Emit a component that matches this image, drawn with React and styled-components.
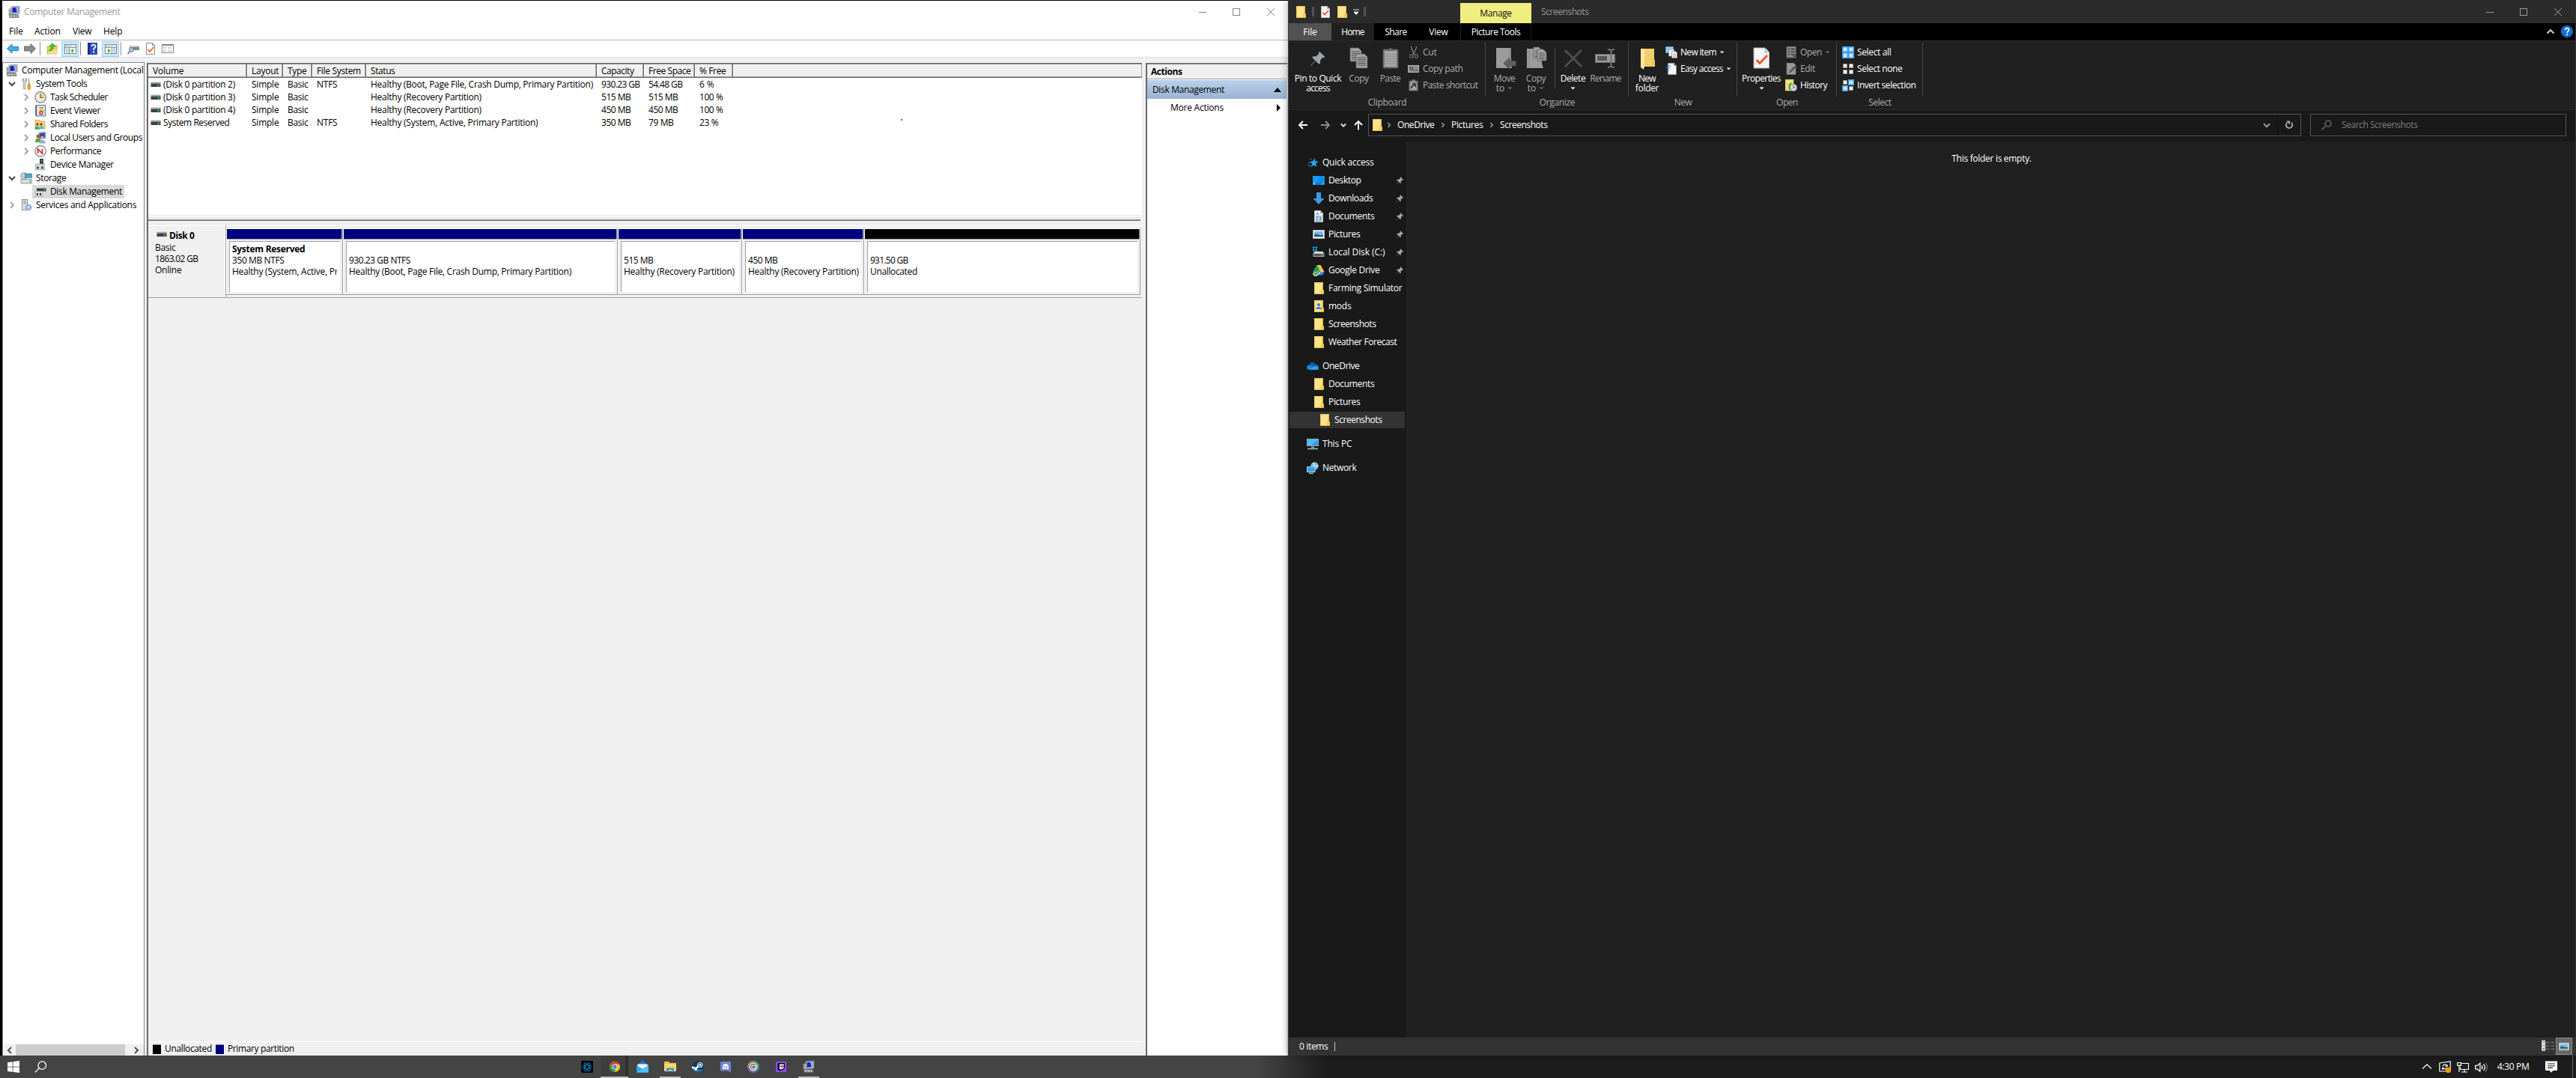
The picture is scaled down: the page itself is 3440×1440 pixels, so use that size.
import React from "react";
import styled, { createGlobalStyle, css } from "styled-components";

const FONT = '"Open Sans", "Noto Sans", sans-serif';

const Global = createGlobalStyle`
  * { box-sizing: border-box; }
  body { margin: 0; background: #000; font-family: ${FONT}; font-size: 12px; overflow: hidden; }
  svg { display: block; flex: none; }
`;

/* ---------- text ---------- */

const ctx = document.createElement("canvas").getContext("2d");
function spacingFor(text, width, bold) {
  ctx.font = `${bold ? 700 : 400} 12px ${FONT}`;
  return (width + 0.4 - ctx.measureText(text).width) / text.length;
}

const TextBox = styled.span`
  display: block;
  flex: none;
  white-space: pre;
  line-height: 16px;
  height: 16px;
  font-weight: ${(p) => (p.$bold ? 700 : 400)};
  color: ${(p) => p.$c || "inherit"};
`;

function Text({ children, w, bold, c }) {
  return (
    <TextBox $bold={bold} $c={c} style={w ? { letterSpacing: spacingFor(children, w, bold) + "px" } : undefined}>
      {children}
    </TextBox>
  );
}

/* ---------- icons ---------- */

const Monitor = () => (
  <>
    <path d="M4 1l11-1v10l-11 1z" fill="#cfd0c8" stroke="#777" strokeWidth=".7" />
    <path d="M5.500 2.300l8-.8v6.800l-8 .6z" fill="#1322c4" />
    <path d="M10 2l3.500-.4v6.500l-2 .2z" fill="#8fb3f5" />
    <rect x="1" y="4" width="4" height="7" fill="#b8bcae" stroke="#777" strokeWidth=".6" />
    <rect x="2" y="6" width="1.500" height="2" fill="#4cc22c" />
    <path d="M1 11.500h12l1 2v2h-12z" fill="#8d979c" stroke="#5b6468" strokeWidth=".6" />
    <path d="M3 13.500h2m2 0h2m2 0h1" stroke="#eee" />
  </>
);

const Page = ({ x = 2, y = 0, w = 12, h = 16, fill = "#fff", stroke = "#888" }) => (
  <path
    d={`M${x + 0.5} ${y + 0.5}h${w - 4}l3 3v${h - 4}h-${w - 1}z M${x + w - 3.5} ${y + 0.5}v3h3`}
    fill={fill}
    stroke={stroke}
  />
);

const Folder = () => (
  <>
    <path d="M2 0h11.500v10l1 .5v5.500H2z" fill="#ffe48c" />
    <path d="M2 0h11.500v10.500H13V.5H2.500v15h9v-5h1.500l.5.500" fill="none" stroke="#e8bf45" strokeWidth=".8" />
    <path d="M12 10.500h2.500v5.200H12z" fill="#ffd966" stroke="#e8bf45" strokeWidth=".8" />
    <path d="M2 15.600h12.500" stroke="#e0b236" strokeWidth=".9" />
  </>
);

const ConsoleWin = ({ right }) => (
  <>
    <rect x=".5" y="2.500" width="15" height="12" fill="#fff" stroke="#808890" />
    <path d="M1 4.500h14" stroke="#9aa2aa" />
    <path d="M1 6.500h14" stroke="#808890" />
    <path d="M11 4.500h1m1 0h1" stroke="#fff" />
    {right ? (
      <>
        <path d="M9.500 7v7" stroke="#808890" />
        <path d="M11 8.500h3.500M11 10.500h3.500M11 12.500h3.500" stroke="#8fa7bd" />
        <path d="M4 8l4 2.700-4 2.700z" fill="#3fae2a" />
      </>
    ) : (
      <>
        <path d="M6.500 7v7" stroke="#808890" />
        <path d="M2 8.500h3.500M2 10.500h3.500M2 12.500h3.500" stroke="#8fa7bd" />
        <path d="M12 8l-4 2.700 4 2.700z" fill="#3fae2a" />
      </>
    )}
  </>
);

const Disk = () => (
  <>
    <path d="M1.500 4h11l1 2H.5z" fill="#dcdcdc" />
    <rect x=".5" y="5.500" width="13" height="5.500" fill="#3a3f42" />
    <rect x=".5" y="5.500" width="13" height="1.200" fill="#b9b9b9" />
    <rect x="9.500" y="8" width="2" height="2" fill="#35e03b" />
  </>
);

const PinShape = ({ fill }) => (
  <path d="M9.600 0.500l5.900 5.900-1.300.9-1-.3-2.900 3 .2 3-1.400 1.200-3.600-3.700L.6 15.800l-.4-.4 5-5L1.700 7l1.300-1.300 3 .1 3-2.900-.3-1.100z" fill={fill} />
);

const Chevron = ({ dir = "right", c = "#999", w = 1.5 }) => {
  const d = { right: "M6 4l4 4-4 4", down: "M4 6l4 4 4-4", left: "M10 4L6 8l4 4", up: "M4 10l4-4 4 4" }[dir];
  return <path d={d} fill="none" stroke={c} strokeWidth={w} />;
};

const SmallSquares = ({ on }) =>
  [
    [0.5, 0.5],
    [8.5, 0.5],
    [0.5, 8.5],
    [8.5, 8.5],
  ].map(([x, y], i) =>
    on[i] ? (
      <g key={i}>
        <rect x={x - 0.5} y={y - 0.5} width="8" height="8" fill="#3aa0f3" />
        <rect x={x + 1} y={y + 1} width="5" height="5" fill="#cbe8ff" />
      </g>
    ) : (
      <rect key={i} x={x + 1} y={y + 1} width="5" height="5" fill="#fff" stroke="#8a8a8a" />
    )
  );

const GreyPage = ({ x, y, w = 14, h = 18 }) => (
  <>
    <path d={`M${x} ${y}h${w - 4}l4 4v${h - 4}h-${w}z`} fill="#a3a3a3" stroke="#5c5c5c" strokeWidth=".8" />
    <path
      d={[5, 7.5, 10, 12.5, 15].filter((v) => v < h - 1).map((v) => `M${x + 2} ${y + v}h${w - 4}`).join("")}
      stroke="#4f4f4f"
      strokeWidth="1"
    />
  </>
);

const ICONS = {
  computer: <Monitor />,
  folder: <Folder />,
  back: <path d="M.5 8L7 2v3.500h8.500v5H7V14z" fill="#3fb0ea" stroke="#1d78b5" strokeWidth=".9" />,
  fwd: <path d="M15.500 8L9 1.500V5H.5v6H9v3.500z" fill="#8c8c8c" stroke="#5f5f5f" strokeWidth=".9" />,
  up: (
    <>
      <path d="M1 5h5l1-1.500h7V15H1z" fill="#f1cf6d" stroke="#c9a13a" strokeWidth=".8" />
      <path d="M2 9h12v6H2z" fill="#f8dd86" />
      <path d="M3 10c1 0 3-1 3-5H3.500L8 .5 12 5H9.500c0 4-2.500 6.500-6.500 6z" fill="#4ec42e" stroke="#2f8d1d" strokeWidth=".6" />
    </>
  ),
  winLeft: <ConsoleWin />,
  winRight: <ConsoleWin right />,
  help: (
    <>
      <rect x="1" y="0" width="13" height="16" fill="#2b4db8" />
      <rect x="1" y="0" width="3" height="16" fill="#1a2f86" />
      <path d="M6.500 5c0-3 5-3 5 0 0 2-2.500 2-2.500 5" fill="none" stroke="#fff" strokeWidth="1.700" />
      <rect x="8" y="11.500" width="2" height="2" fill="#fff" />
    </>
  ),
  drivePlug: (
    <>
      <path d="M3 4h12l1 2v4H4z" fill="#7b8286" />
      <path d="M3 4h12l.8 2H4z" fill="#c9cdd0" />
      <rect x="12" y="7" width="2" height="2" fill="#2fd63a" />
      <circle cx="5.500" cy="9.500" r="3" fill="#a9c8dc" stroke="#6e7c85" />
      <path d="M3.500 11.500L.5 15" stroke="#6e7c85" strokeWidth="1.600" />
    </>
  ),
  propsLight: (
    <>
      <Page />
      <path d="M4.500 9l2.500 3 5-6" fill="none" stroke="#f26522" strokeWidth="1.800" />
    </>
  ),
  listWin: (
    <>
      <rect x=".5" y="2.500" width="15" height="11" fill="#fff" stroke="#7c858c" />
      <path d="M1 3.500h14" stroke="#7c858c" />
      <path d="M2.500 6.500l1 1 2-2M2.500 10.500l1 1 2-2" stroke="#3a8fe0" fill="none" />
      <path d="M8 7h5M8 11h5" stroke="#9aa2a8" />
    </>
  ),
  tools: (
    <>
      <path d="M3 1v4l1.500 1V15h2.500V6L8.500 5V1L7 1v3H4.500V1z" fill="#d3d6d8" stroke="#888d90" strokeWidth=".7" />
      <path d="M11.500 1v7" stroke="#9da1a4" strokeWidth="1.500" />
      <rect x="10" y="8" width="3.500" height="7.500" rx="1.500" fill="#eda21f" stroke="#c47c0a" strokeWidth=".6" />
    </>
  ),
  clock: (
    <>
      <circle cx="8" cy="8" r="7.200" fill="#f3ecd6" stroke="#8b8d8f" strokeWidth="1.400" />
      <path d="M8 8V2.500a5.500 5.500 0 0 1 5.500 5.500z" fill="#efd08a" />
      <path d="M8 3.500V8.500h4" stroke="#4d5b6a" fill="none" strokeWidth="1.200" />
    </>
  ),
  event: (
    <>
      <rect x="2.500" y=".5" width="12" height="14.500" fill="#dfe9f3" stroke="#4c6f97" />
      <path d="M2 1v14M1 3h2M1 6h2M1 9h2M1 12h2" stroke="#333f4d" />
      <path d="M6 3.500h6M6 12.500h3" stroke="#6c8fb5" />
      <path d="M9.500 3l3 5.500h-6z" fill="#ffcf28" stroke="#a67a00" strokeWidth=".5" />
      <circle cx="9" cy="11" r="2.700" fill="#d9363e" />
      <path d="M8 10l2 2m0-2l-2 2" stroke="#fff" strokeWidth=".8" />
    </>
  ),
  shared: (
    <>
      <path d="M1 2.500h6l1 1.500h6v10H1z" fill="#f3d477" stroke="#c6a040" strokeWidth=".8" />
      <circle cx="4" cy="8" r="1.700" fill="#6b4a33" />
      <circle cx="9" cy="8" r="1.700" fill="#6b4a33" />
      <path d="M.5 15c0-6 6-6 6.500 0z" fill="#46ad86" />
      <path d="M6.500 14c0-5 5.500-5 6 0z" fill="#5ab3c9" />
    </>
  ),
  users: (
    <>
      <path d="M6 1l9-1v9l-9 1z" fill="#cfd0c8" stroke="#777" strokeWidth=".6" />
      <path d="M7 2l7-.8V8l-7 .8z" fill="#2a4bd0" />
      <circle cx="5" cy="6" r="2.600" fill="#9b6a3c" />
      <path d="M.8 14c0-7 8-7 8.400 0z" fill="#57a84a" />
      <circle cx="10.500" cy="8" r="2.300" fill="#e0b070" />
      <path d="M6.500 15.500c0-6 8-6 8.500 0z" fill="#86acd8" />
    </>
  ),
  perf: (
    <>
      <circle cx="8" cy="8" r="7.200" fill="#fff" stroke="#8b8d8f" strokeWidth="1.400" />
      <path d="M4.500 11V5l6 6V5" stroke="#d2202a" strokeWidth="1.600" fill="none" />
    </>
  ),
  device: (
    <>
      <rect x="7" y="0" width="5" height="7" fill="#3b4146" />
      <rect x="9" y="2" width="1.500" height="1.500" fill="#46d24a" />
      <rect x="1.500" y="7" width="12" height="8" fill="#d5d7d9" stroke="#9b9fa2" strokeWidth=".7" />
      <rect x="3.500" y="10.500" width="2" height="3" fill="#222" />
      <rect x="9.500" y="10.500" width="2" height="3" fill="#222" />
    </>
  ),
  storage: (
    <>
      <circle cx="5" cy="5" r="4.500" fill="#c9cfd3" stroke="#868d92" strokeWidth=".8" />
      <circle cx="5" cy="5" r="1.300" fill="#fff" stroke="#868d92" strokeWidth=".5" />
      <rect x="6.500" y="2" width="9" height="5.500" fill="#43a7df" stroke="#5b6a74" strokeWidth=".7" />
      <path d="M1 9.500h14.500v5.500H1z" fill="#d9dcde" stroke="#80868a" strokeWidth=".8" />
      <rect x="12" y="11.500" width="2" height="2" fill="#3ec83a" />
    </>
  ),
  diskmgmt: (
    <>
      <path d="M4 2h11l1 1.500H3z" fill="#d6d8da" />
      <rect x="3" y="3.500" width="12.500" height="4" fill="#3b4146" />
      <rect x="12" y="4.700" width="2" height="1.600" fill="#46d24a" />
      <path d="M1.500 7.500h9v7h-9z" fill="#dcdedf" stroke="#a2a6a8" strokeWidth=".7" />
      <rect x="3" y="10" width="1.800" height="3" fill="#222" />
      <rect x="7" y="10" width="1.800" height="3" fill="#222" />
    </>
  ),
  services: (
    <>
      <rect x="2.500" y=".5" width="7" height="14" fill="#dce1e4" stroke="#8a9296" />
      <path d="M4 3h4M4 5.500h4" stroke="#5d8f6a" />
      <circle cx="11" cy="11" r="3.400" fill="none" stroke="#8fb2d4" strokeWidth="2.600" strokeDasharray="2 .7" />
      <circle cx="11" cy="11" r="2.300" fill="#dfeaf4" stroke="#6d93b8" strokeWidth=".8" />
    </>
  ),
  disk: <Disk />,
  cRight: <Chevron c="#a0a0a0" w={1.8} />,
  cDown: <Chevron dir="down" c="#404040" w={2} />,
  cRightSm: <path d="M6.300 5l3 3-3 3" fill="none" stroke="#9a9a9a" strokeWidth="1.500" />,
  sbLeft: <Chevron dir="left" c="#505050" w={2} />,
  sbRight: <Chevron c="#505050" w={2} />,
  navDown: <path d="M4.800 6.500L8 9.700l3.200-3.200" fill="none" stroke="#ddd" strokeWidth="2" />,
  addrDown: <path d="M4 6.300l4 4 4-4" fill="none" stroke="#999" strokeWidth="2" />,
  ribUp: <path d="M3.500 10.500L8 6.200l4.500 4.300" fill="none" stroke="#c8c8c8" strokeWidth="2.200" />,
  navBack: <path d="M15 8H4M9 3L4 8l5 5" fill="none" stroke="#fff" strokeWidth="1.900" />,
  navFwd: <path d="M2 8h11M8 3l5 5-5 5" fill="none" stroke="#8a8a8a" strokeWidth="1.900" />,
  navUp: <path d="M8 14.500V3M3 8l5-5 5 5" fill="none" stroke="#fff" strokeWidth="1.900" />,
  refresh: (
    <>
      <path d="M10.800 4.800A4.200 4.200 0 1 1 5.500 4.600" fill="none" stroke="#aaa" strokeWidth="1.800" />
      <path d="M4 2.500h5v5z" fill="#aaa" />
    </>
  ),
  glass: <path d="M6.200 9.800L1.500 14.500M6 6a4 4 0 1 0 8 0a4 4 0 1 0-8 0" fill="none" stroke="#888" strokeWidth="1.100" />,
  glassWhite: <path d="M6.200 10L.8 15.400M5 6.200a5 5 0 1 0 10.500 0a5 5 0 1 0-10.500 0" fill="none" stroke="#fff" strokeWidth="1.300" />,
  propsDark: (
    <>
      <Page x={2} w={12} fill="#f4f4f4" stroke="#bbb" />
      <path d="M4.500 9l2.500 2.500 5-5.500" fill="none" stroke="#f0541e" strokeWidth="1.800" />
    </>
  ),
  helpBlue: (
    <>
      <circle cx="8" cy="8" r="8" fill="#0a6fd6" />
      <path d="M5.700 6c0-3.200 4.800-3 4.800 0 0 1.800-2.400 1.800-2.400 4" fill="none" stroke="#fff" strokeWidth="1.800" />
      <rect x="7.200" y="11.200" width="1.900" height="1.900" fill="#fff" />
    </>
  ),
  cut: (
    <>
      <path d="M4.500 0c0 4 2 7 5.500 11.500M11.500 0c0 4-2 7-5.500 11.500" stroke="#8a8a8a" fill="none" strokeWidth="1.200" />
      <circle cx="4.800" cy="13" r="2.200" fill="none" stroke="#6a6a6a" strokeWidth="1.300" />
      <circle cx="11.200" cy="13" r="2.200" fill="none" stroke="#6a6a6a" strokeWidth="1.300" />
    </>
  ),
  copyPath: (
    <>
      <rect x=".5" y="3.500" width="14" height="9" fill="#8d8d8d" stroke="#b5b5b5" />
      <path d="M2.500 5.500l2 5M5.500 5.500l2 5M9 10h1M11 10h1M12.700 10h1" stroke="#2a2a2a" />
    </>
  ),
  pasteShort: (
    <>
      <rect x="1.500" y="2" width="12" height="13.500" fill="#7a7a7a" />
      <rect x="3.500" y="4" width="8" height="10" fill="#a5a5a5" />
      <rect x="5" y=".5" width="5" height="3" fill="#888" />
      <path d="M5 12c0-3 1-4 3.500-4.500M6 6h4v4" fill="none" stroke="#222" strokeWidth="1.700" />
    </>
  ),
  newItem: (
    <>
      <rect x=".5" y=".5" width="10" height="8" fill="#9bd0f5" stroke="#4d94c9" />
      <rect x="4.500" y="4" width="7" height="9" fill="#fff" stroke="#888" strokeWidth=".8" />
      <path d="M8.500 6.500h5l2 2v7h-7z" fill="#fff" stroke="#888" strokeWidth=".8" />
      <path d="M10 10h4M10 12h4M10 14h4" stroke="#cf6b6b" strokeWidth=".8" />
    </>
  ),
  easy: (
    <>
      <Page x={3} w={12} fill="#f6f6f6" stroke="#999" />
      <path d="M2 4h5M0 7h6M2 10h3" stroke="#2a7cc7" strokeWidth="1.200" />
    </>
  ),
  openG: (
    <>
      <rect x="2" y="0" width="12" height="15" fill="#8c8c8c" stroke="#666" />
      <path d="M4 3.500h2M4 7h2M4 10.500h2M7.500 3.500h5M7.500 7h5M7.500 10.500h3" stroke="#333" strokeWidth="1.600" />
      <path d="M11 16v-3H9l3-3.500 3 3.500h-2v3z" fill="#555" />
    </>
  ),
  editG: (
    <>
      <path d="M2 0h9l3 3v12.500H2z" fill="#9a9a9a" stroke="#6b6b6b" />
      <path d="M5 13.500l1-3.500 7.500-7 2 2-7.500 7.500z" fill="#5a5a5a" />
    </>
  ),
  history: (
    <>
      <path d="M0 0h11v15H0z" fill="#ffe07a" stroke="#e0b43c" strokeWidth=".8" />
      <path d="M8 4C4 6 4 9 5 11l-1.700.5L7 14.500l1-4.300-1.400.4C6 8.500 6.500 7 9 6z" fill="#2fb32f" />
      <circle cx="11" cy="11" r="4.700" fill="#d9dde0" stroke="#81878b" />
      <path d="M11 8v3h2.500M8.500 13l1-1" stroke="#555" fill="none" />
    </>
  ),
  selAll: <SmallSquares on={[1, 1, 1, 1]} />,
  selNone: <SmallSquares on={[0, 0, 0, 0]} />,
  selInv: <SmallSquares on={[0, 1, 1, 0]} />,
  star: (
    <>
      <path d="M10.500 2l1 4.500 4.500.3-3.900 2.700 1.300 4.500-3.900-2.500L5.700 14l1.500-4.300L4 6.800l4.300-.3z" fill="#2aa5f5" />
      <path d="M1.500 8.500h4M.5 11h4M2.500 13.200h3M4 3.500h3" stroke="#1b6dac" strokeWidth="1" />
    </>
  ),
  desktop: (
    <>
      <rect x="0" y="2" width="16" height="12" fill="#1a9bf5" />
      <path d="M9 2h7v12H3z" fill="#0f8ce8" />
      <path d="M0 12.500h16" stroke="#0b5fa5" />
      <path d="M1 12.500h2M12 12.500h1M14 12.500h1" stroke="#fff" />
    </>
  ),
  download: <path d="M5 0h6v8h4.500L8 16 .5 8H5z" fill="#3f9ae8" />,
  docs: (
    <>
      <Page x={2} w={12} fill="#f5f5f5" stroke="#b5b5b5" />
      <path d="M5 6l1.500-3L8 6M4 8h8M4 10h4M4 12h4M4 14h8" stroke="#2b7fd0" fill="none" strokeWidth="1" />
      <rect x="9" y="9.500" width="3" height="3" fill="#4a8" />
    </>
  ),
  pics: (
    <>
      <rect x=".5" y="2.500" width="15" height="11" fill="#fff" stroke="#aaa" />
      <rect x="2" y="4" width="12" height="8" fill="#7fb8ee" />
      <path d="M2 8c3-2 6 2 12 1v3H2z" fill="#2f5f5a" />
      <path d="M2 11h12v1H2z" fill="#8fc3dd" />
    </>
  ),
  drive: (
    <>
      <path d="M0 .5h2.500V3H0zM3.500 .5H6V3H3.500zM0 4h2.500v2.500H0zM3.500 4H6v2.500H3.500z" fill="#12a7ee" />
      <path d="M2.500 7h11l1.500 2.500H1z" fill="#e4e4e4" />
      <rect x="1" y="9.500" width="14" height="4" fill="#55595c" stroke="#c8c8c8" strokeWidth=".8" />
      <rect x="11" y="10.700" width="1.600" height="1.600" fill="#3be04a" />
    </>
  ),
  gdrive: (
    <>
      <path d="M5.500 1h5l5 9h-5z" fill="#f7c62f" />
      <path d="M5.500 1L.3 10l2.600 4.500L8 5.500z" fill="#1ea362" />
      <path d="M5.500 10h10l-2.600 4.500H3z" fill="#4688f4" />
      <path d="M1 11.500l3 3L11 7" stroke="#fff" strokeWidth="4" fill="none" />
      <path d="M1.500 11.500l2.500 2.500L10.500 7.500" stroke="#3f9d22" strokeWidth="2.200" fill="none" />
    </>
  ),
  folderUser: (
    <>
      <Folder />
      <circle cx="8" cy="6.200" r="2.100" fill="#3c7de0" />
      <path d="M4 12c0-4 8-4 8 0z" fill="#3c7de0" />
    </>
  ),
  onedrive: (
    <>
      <path d="M3.500 6.500C4.500 2.500 9 1.500 11.500 5.500c2.500 0 4 1.500 4 3.500l-8 1z" fill="#0f5fb4" />
      <path d="M0 10c0-2.500 2-4 4.500-3.500L13 13H3c-2 0-3-1.500-3-3z" fill="#1583d8" />
      <path d="M3 13l6-4.500c3-1 6.500-.5 7 2 0 1.500-1 2.500-2.500 2.500z" fill="#29a3ec" />
    </>
  ),
  thispc: (
    <>
      <rect x=".5" y="1.500" width="15" height="9" fill="#4dbcfa" stroke="#8fa7b5" />
      <path d="M15 2v8H6z" fill="#2aa0ec" />
      <path d="M6 12.500h4M1 14.500h14" stroke="#aebac2" strokeWidth="1.300" />
    </>
  ),
  network: (
    <>
      <circle cx="10.500" cy="5.500" r="5.200" fill="#7fb9d8" />
      <path d="M8 2c2 0 3 1 2 3s3 1 5 0" stroke="#d6ecf7" fill="none" strokeWidth="1.500" />
      <rect x=".5" y="6.500" width="10.500" height="7" fill="#2fa6f0" stroke="#9fc6dd" />
      <path d="M3 15.300h6" stroke="#c5ced4" strokeWidth="1.300" />
    </>
  ),
  pin: (
    <g transform="translate(3 3) scale(.65)">
      <PinShape fill="#9aa7b0" />
    </g>
  ),
  viewDetails: (
    <>
      <rect x=".5" y="1" width="4" height="12.500" fill="#eee" stroke="#bbb" />
      <rect x="1.800" y="2.500" width="1.500" height="1.500" fill="#4a6" />
      <rect x="1.800" y="6.500" width="1.500" height="1.500" fill="#37c" />
      <rect x="1.800" y="10.500" width="1.500" height="1.500" fill="#d22" />
      <path d="M6 3.500h4M12 3.500h4M6 7.500h4M12 7.500h4M6 11.500h4M12 11.500h4" stroke="#8a8a8a" />
    </>
  ),
  win: <path d="M0 2.300l6.700-1v6.500H0zM7.500 1.200L16 0v7.800H7.500zM0 8.500h6.700V15L0 14zM7.500 8.500H16V16l-8.500-1z" fill="#fff" />,
  bnet: (
    <>
      <rect width="16" height="16" rx="1" fill="#05080c" />
      <g fill="none" stroke="#1496dc" strokeWidth=".8">
        <ellipse cx="8" cy="8.300" rx="6.200" ry="2.600" />
        <ellipse cx="8" cy="8.300" rx="6.200" ry="2.600" transform="rotate(60 8 8.300)" />
        <ellipse cx="8" cy="8.300" rx="6.200" ry="2.600" transform="rotate(120 8 8.300)" />
      </g>
    </>
  ),
  chrome: (
    <>
      <circle cx="8" cy="8" r="7" fill="#fbc116" />
      <path d="M14.060 4.500H8L5 9.500l-3.060-5A7 7 0 0 1 14.060 4.500z" fill="#e33b2e" />
      <path d="M1.940 4.500L5 9.700l5 .3-2.500 5A7 7 0 0 1 1.940 4.500z" fill="#2a9d47" />
      <circle cx="8" cy="8" r="3.500" fill="#fff" />
      <circle cx="8" cy="8" r="2.700" fill="#4285f4" />
    </>
  ),
  mail: (
    <>
      <path d="M0 6l8-6 8 6v9.500H0z" fill="#1a7fd0" />
      <path d="M1.500 4.500h13V9l-6.500 4-6.500-4z" fill="#f2f7fb" />
      <path d="M0 6l8 5 8-5v9.500H0z" fill="#28a8ea" />
      <path d="M0 15.500L16 6v9.500z" fill="#50c4f6" />
    </>
  ),
  explorer: (
    <>
      <path d="M0 1h6l1.500 2H16v11H0z" fill="#f6c244" />
      <path d="M0 4h16v10H0z" fill="#ffd869" />
      <path d="M3 9.500h10V15h-3v-3H6v3H3z" fill="#3d97dc" />
    </>
  ),
  steam: (
    <>
      <circle cx="8" cy="8" r="8" fill="#123a63" />
      <path d="M1 11.500A8 8 0 0 0 15 11.500z" fill="#1f72ad" />
      <path d="M0 8.500l5 2 4.500-4" stroke="#fff" strokeWidth="2.600" fill="none" />
      <circle cx="10.800" cy="5.500" r="3" fill="#123a63" stroke="#fff" strokeWidth="1.200" />
      <circle cx="10.800" cy="5.500" r="1.400" fill="#fff" />
      <circle cx="5.300" cy="11" r="2" fill="#fff" />
    </>
  ),
  discord: (
    <>
      <path d="M1 2.500A1.500 1.500 0 0 1 2.500 1h11A1.500 1.500 0 0 1 15 2.500V16l-3-2.500H2.500A1.500 1.500 0 0 1 1 12z" fill="#7285d4" />
      <path d="M4 10.500C4 7 5 5 5 5c1.500-1 4.500-1 6 0 0 0 1 2 1 5.500-1 1-2 1-2 1l-.7-1H6.700l-.7 1s-1 0-2-1z" fill="#fff" />
      <circle cx="6.500" cy="8.200" r="1" fill="#7285d4" />
      <circle cx="9.500" cy="8.200" r="1" fill="#7285d4" />
    </>
  ),
  rings: (
    <>
      <circle cx="8" cy="8" r="7.900" fill="#596066" />
      <path d="M8 .8A7.200 7.200 0 0 1 15.200 8" fill="none" stroke="#3da36a" strokeWidth="1.600" />
      <path d="M15.200 8A7.200 7.200 0 0 1 8 15.200" fill="none" stroke="#3a7ec0" strokeWidth="1.600" />
      <path d="M8 15.200A7.200 7.200 0 0 1 .8 8" fill="none" stroke="#8e50a8" strokeWidth="1.600" />
      <path d="M.8 8A7.200 7.200 0 0 1 8 .8" fill="none" stroke="#c87e4a" strokeWidth="1.600" />
      <circle cx="8" cy="8" r="5" fill="none" stroke="#f2f2f2" strokeWidth="1.400" />
      <circle cx="8.300" cy="8.300" r="2.500" fill="none" stroke="#f2f2f2" strokeWidth="1.300" />
    </>
  ),
  twitch: (
    <>
      <rect x="1" y="1" width="14" height="14" rx="1" fill="#9147ff" />
      <path d="M4.500 3H13v7l-2.500 2.500H8L6 14.500v-2H3.500V4.500z" fill="#0b0612" />
      <path d="M6 4.500h5.700v4.800L10.200 11H8.500L7.300 12.200V11H6z" fill="#fff" />
      <path d="M8 6v3M10.200 6v3" stroke="#0b0612" strokeWidth="1.100" />
    </>
  ),
  trayUp: <path d="M2 10.500L8 5l6 5.500" fill="none" stroke="#eee" strokeWidth="1.500" />,
  sync: (
    <>
      <path d="M.8 3l14.400-2v13H.8z" fill="none" stroke="#fff" strokeWidth="1.200" />
      <path d="M5 7.500c1-3 4.500-3 5.500-1M11 5v2.300H8.500M10.500 9c-1 2.500-4.500 2.500-5.500.5M4.700 12V9.500H7" fill="none" stroke="#fff" strokeWidth="1.200" />
      <circle cx="12.500" cy="12.500" r="3.700" fill="#ff9a0c" />
    </>
  ),
  lan: (
    <>
      <path d="M5 3.500h10.500v8H4.500v-3M10 12v2.500M6 15h8" fill="none" stroke="#fff" strokeWidth="1.200" />
      <path d="M.7 2.500h4.600v3.800H.7zM3 6.300V15" fill="none" stroke="#fff" strokeWidth="1.200" />
    </>
  ),
  volume: (
    <>
      <path d="M.7 6h2.500L6.500 3v10.500l-3.300-3H.7z" fill="none" stroke="#fff" strokeWidth="1.200" />
      <path d="M8.500 6c1.200 1.500 1.200 3 0 4.500M10.800 4.200c2.300 2.500 2.300 5.600 0 8" fill="none" stroke="#fff" strokeWidth="1.200" />
      <path d="M13 2.500c3.300 3.500 3.300 8 0 11.500" fill="none" stroke="#777" strokeWidth="1.200" />
    </>
  ),
  action: (
    <>
      <path d="M0 .5h16v12.500h-5.500L8 15.800 5.500 13H0z" fill="#fff" />
      <path d="M3 4h10M3 6.700h10M3 9.400h7" stroke="#222" strokeWidth="1.100" />
    </>
  ),
};

function Icon({ n, size = 16 }) {
  return (
    <svg width={size} height={size} viewBox="0 0 16 16">
      {ICONS[n]}
    </svg>
  );
}

const BIG = {
  pin: (
    <g transform="translate(6 6) scale(1.250)">
      <PinShape fill="#9aa7b0" />
    </g>
  ),
  copy: (
    <>
      <GreyPage x={4} y={2} w={15} h={18} />
      <GreyPage x={12} y={10} w={15} h={19} />
    </>
  ),
  paste: (
    <>
      <rect x="6" y="4" width="20" height="25" rx="1" fill="#7b7b7b" stroke="#555" />
      <rect x="8" y="6" width="16" height="21" fill="#a8a8a8" />
      <path d="M8 11h16M8 14h16M8 17h16M8 20h16M8 23h16" stroke="#8a8a8a" />
      <path d="M11 6V4h3a2 2 0 0 1 4 0h3v2z" fill="#666" />
    </>
  ),
  moveTo: (
    <>
      <path d="M5 2h20v20l1 7H5z" fill="#9b9b9b" />
      <path d="M24 2v14" stroke="#777" />
      <path d="M15 22.500l7.500-7v4H31v6.500h-8.500v4z" fill="#606060" stroke="#4c4c4c" />
    </>
  ),
  copyTo: (
    <>
      <path d="M4 3h20v20l2 6H4z" fill="#9b9b9b" />
      <path d="M7 3v26" stroke="#888" />
      <GreyPage x={13} y={1} w={11} h={14} />
      <GreyPage x={18} y={4} w={12} h={15} />
    </>
  ),
  del: <path d="M5 5l22 22M27 5L5 27" stroke="#4d4d4d" strokeWidth="3" />,
  rename: (
    <>
      <rect x="2.500" y="10.500" width="26" height="11" fill="#9a9a9a" stroke="#6a6a6a" />
      <rect x="5" y="13" width="13" height="6" fill="#555" />
      <path d="M19 4c3 0 4.500 1 4.500 3v18c0 2-1.500 3-4.500 3M28 4c-3 0-4.500 1-4.500 3M28 28c-3 0-4.500-1-4.500-3" fill="none" stroke="#6f6f6f" strokeWidth="2" />
    </>
  ),
  newFolder: (
    <>
      <path d="M7 3h18v14l1 1v9H7z" fill="#f3cf6c" />
      <path d="M7 3h5v23l-1 5-4-3z" fill="#ffe7a0" />
      <path d="M24 17v9" stroke="#d9ad3e" />
    </>
  ),
  props: (
    <>
      <path d="M6 2h15l5.500 5.500V29H6z" fill="#f5f5f5" stroke="#aaa" />
      <path d="M21 2v5.500h5.500" fill="#ddd" stroke="#aaa" />
      <path d="M9.500 18l4.500 4.500L24 12" fill="none" stroke="#f0541e" strokeWidth="2.800" />
    </>
  ),
};

const BigIcon = ({ n }) => (
  <svg width="32" height="32" viewBox="0 0 32 32">
    {BIG[n]}
  </svg>
);

/* ---------- desktop frame ---------- */

const Desktop = styled.div`
  width: 3440px;
  height: 1440px;
  display: flex;
  flex-direction: column;
  background: #000;
`;
const Windows = styled.div`
  height: 1410px;
  display: flex;
`;

/* ---------- computer management ---------- */

const Mmc = styled.div`
  width: 1717px;
  margin: 1px 0 0 3px;
  height: 1409px;
  background: #fff;
  color: #000;
  display: flex;
  flex-direction: column;
`;
const TitleBar = styled.div`
  height: 30px;
  display: flex;
  align-items: center;
  padding-left: 8px;
  gap: 5px;
  flex: none;
`;
const WinButtons = styled.div`
  margin-left: auto;
  display: flex;
  align-items: center;
  padding-right: 18px;
`;
const MenuBar = styled.div`
  height: 23px;
  display: flex;
  align-items: center;
  padding-left: 9px;
  border-bottom: 1px solid #b4b8c0;
  flex: none;
`;
const MenuItem = styled.div`
  width: ${(p) => p.$w}px;
`;
const ToolBar = styled.div`
  height: 23px;
  display: flex;
  align-items: center;
  padding-left: 2px;
  border-bottom: 1px solid #dadada;
  flex: none;
`;
const ToolButton = styled.div`
  width: 23px;
  height: 21px;
  margin-right: ${(p) => p.$mr || 0}px;
  display: flex;
  align-items: center;
  justify-content: center;
  ${(p) => p.$on && css`background: #cce8ff; border: 1px solid #99d1ff;`}
`;
const ToolSep = styled.div`
  width: 1px;
  height: 18px;
  margin-right: ${(p) => p.$mr}px;
  background: #8d8d8d;
`;
const MmcBody = styled.div`
  flex: 1;
  display: flex;
  background: #f0f0f0;
  padding-top: 6px;
  min-height: 0;
`;
const TreePane = styled.div`
  width: 190px;
  background: #fff;
  border: 1px solid #828790;
  border-bottom: 0;
  display: flex;
  flex-direction: column;
  padding: 1px 0 0 1px;
  overflow: hidden;
`;
const TreeRow = styled.div`
  height: 18px;
  flex: none;
  display: flex;
  align-items: center;
  padding-left: ${(p) => [3, 3, 22][p.$level]}px;
`;
const TreeToggle = styled.div`
  width: ${(p) => (p.$level ? 19 : 0)}px;
  display: flex;
  align-items: center;
`;
const TreeLabel = styled.div`
  display: flex;
  align-items: center;
  gap: 5px;
  height: 18px;
  margin-left: ${(p) => (p.$on ? -3 : 0)}px;
  padding: 0 ${(p) => (p.$on ? "3px" : "0")};
  background: ${(p) => (p.$on ? "#d9d9d9" : "transparent")};
`;
const HScroll = styled.div`
  margin-top: auto;
  height: 15px;
  display: flex;
  align-items: center;
  background: #f0f0f0;
`;
const HThumb = styled.div`
  height: 15px;
  width: 146px;
  margin-right: 7px;
  background: #cdcdcd;
`;
const CenterPane = styled.div`
  width: 1329px;
  margin: 1px 0 0 3px;
  border: solid #696969;
  border-width: 2px 0 0 2px;
  border-top-color: #757575;
  display: flex;
  flex-direction: column;
`;
const VolumeList = styled.div`
  position: relative;
  height: 201px;
  background: #fff;
  flex: none;
`;
const Speck = styled.div`
  position: absolute;
  left: 1005px;
  top: 73px;
  width: 2px;
  height: 2px;
  background: #5560d8;
`;
const COLS = "132px 48px 39px 72px 308px 63px 68px 51px 1fr";
const ListHead = styled.div`
  display: grid;
  grid-template-columns: ${COLS};
  height: 18px;
  background: #f0f0f0;
  border-bottom: 1px solid #696969;
`;
const HeadCell = styled.div`
  padding-left: 6px;
  display: flex;
  align-items: center;
  border-right: 1px solid #696969;
  box-shadow: inset -1px -1px #a0a0a0, inset 1px 1px #fff;
  &:last-child { border-right: 0; }
`;
const ListRow = styled.div`
  display: grid;
  grid-template-columns: ${COLS};
  height: 17px;
`;
const ListCell = styled.div`
  padding-left: ${(p) => (p.$first ? 3 : 6)}px;
  display: flex;
  align-items: center;
  gap: 1px;
`;
const ListFoot = styled.div`
  height: 8px;
  flex: none;
  margin-right: 2px;
  background: linear-gradient(#f0f0f0 0 2px, #fff 2px 3px, #e3e3e3 3px 4px, #f0f0f0 4px 6px, #a0a0a0 6px 7px, #696969 7px);
`;
const DiskArea = styled.div`
  flex: 1;
  padding-top: 6px;
  border-bottom: 1px solid #fff;
`;
const DiskRow = styled.div`
  display: flex;
  height: 97px;
`;
const DiskInfo = styled.div`
  width: 104px;
  border-top: 1px solid #fff;
  border-right: 1px solid #a0a0a0;
  border-bottom: 1px solid #a0a0a0;
  box-shadow: inset -2px 0 #fafafa;
  padding: 5px 0 0 9px;
  display: flex;
  flex-direction: column;
`;
const InfoLine = styled.div`
  height: 15px;
  display: flex;
  align-items: center;
  padding-left: ${(p) => (p.$lead ? 2 : 0)}px;
  gap: 1px;
  margin-bottom: ${(p) => (p.$lead ? 1 : 0)}px;
  svg { margin-top: -4px; }
`;
const Partitions = styled.div`
  width: 1223px;
  border-top: 1px solid #fff;
  border-bottom: 1px solid #a0a0a0;
  padding: 3px 0;
  display: flex;
`;
const Partition = styled.div`
  width: ${(p) => p.$w}px;
  height: 89px;
  border-right: 1px solid #a0a0a0;
  border-bottom: 1px solid #a0a0a0;
  box-shadow: inset 1px 1px #fff;
  padding-top: 1px;
`;
const PartBar = styled.div`
  height: 13px;
  margin: 0 1px 0 1px;
  background: ${(p) => p.$c};
  box-shadow: 0 1px #a0a0a0, 1px 0 #a0a0a0;
`;
const PartBox = styled.div`
  margin: 3px 3px 0 4px;
  height: 68px;
  border: 1px solid #a0a0a0;
  border-right: 0;
  border-bottom: 0;
  background: #fff;
  padding: 2px 0 0 3px;
  overflow: hidden;
`;
const PartLine = styled.div`
  height: 15px;
  margin-right: ${(p) => (p.$clip ? 4 : 0)}px;
  overflow: ${(p) => (p.$clip ? "hidden" : "visible")};
`;
const Legend = styled.div`
  height: 18px;
  padding-left: 6px;
  display: flex;
  align-items: center;
  gap: 5px;
`;
const Swatch = styled.div`
  width: 11px;
  height: 13px;
  border-top: 1px solid #888;
  background: ${(p) => p.$c};
  background-clip: padding-box;
`;
const ActionsPane = styled.div`
  width: 190px;
  margin: 1px 0 0 5px;
  border: solid #696969;
  border-width: 2px 0 0 2px;
  border-top-color: #757575;
  border-right: 2px solid #e3e3e3;
  background: #fff;
`;
const ActionsHead = styled.div`
  height: 20px;
  background: #f0f0f0;
  border-bottom: 1px solid #a0a0a0;
  padding-left: 5px;
  display: flex;
  align-items: center;
`;
const ActionsGroup = styled.div`
  height: 25px;
  margin-top: 1px;
  background: linear-gradient(#bad0ea, #9ab3d3);
  display: flex;
  align-items: center;
  justify-content: space-between;
  padding: 0 7px;
`;
const ActionsItem = styled(ActionsGroup)`
  height: 24px;
  margin: 0;
  background: none;
  padding: 0 8px 0 31px;
`;

const TREE = [
  ["computer", "Computer Management (Local", 162, 0],
  ["tools", "System Tools", 68, 1, "cDown"],
  ["clock", "Task Scheduler", 76.500, 2, "cRight"],
  ["event", "Event Viewer", 66.500, 2, "cRight"],
  ["shared", "Shared Folders", 76.500, 2, "cRight"],
  ["users", "Local Users and Groups", 122.500, 2, "cRight"],
  ["perf", "Performance", 67.700, 2, "cRight"],
  ["device", "Device Manager", 84.500, 2],
  ["storage", "Storage", 40, 1, "cDown"],
  ["diskmgmt", "Disk Management", 95.500, 2, null, true],
  ["services", "Services and Applications", 133.700, 1, "cRight"],
];

const HEAD = [["Volume", 41], ["Layout", 36], ["Type", 25], ["File System", 58.500], ["Status", 32], ["Capacity", 43], ["Free Space", 56], ["% Free", 35]];
const BOOT = ["Healthy (Boot, Page File, Crash Dump, Primary Partition)", 296.500];
const REC = ["Healthy (Recovery Partition)", 147.500];
const ROWS = [
  [["(Disk 0 partition 2)", 95.500], ["Simple", 36], ["Basic", 27], ["NTFS", 27], BOOT, ["930.23 GB", 51], ["54.48 GB", 45], ["6 %", 19]],
  [["(Disk 0 partition 3)", 95.500], ["Simple", 36], ["Basic", 27], null, REC, ["515 MB", 39], ["515 MB", 39], ["100 %", 31]],
  [["(Disk 0 partition 4)", 95.500], ["Simple", 36], ["Basic", 27], null, REC, ["450 MB", 39], ["450 MB", 39], ["100 %", 31]],
  [["System Reserved", 88], ["Simple", 36], ["Basic", 27], ["NTFS", 27], ["Healthy (System, Active, Primary Partition)", 223], ["350 MB", 39], ["79 MB", 33], ["23 %", 25]],
];
const PARTS = [
  [156, "#000080", ["System Reserved", 97], ["350 MB NTFS", 69], ["Healthy (System, Active, Primary Partition)", 223.500]],
  [367, "#000080", null, ["930.23 GB NTFS", 81.500], BOOT],
  [166, "#000080", null, ["515 MB", 39], REC],
  [163, "#000080", null, ["450 MB", 39], REC],
  [369, "#000", null, ["931.50 GB", 50], ["Unallocated", 62.500]],
];

const CaptionGlyphs = ({ c }) => (
  <WinButtons>
    <svg width="101" height="10" viewBox="0 0 101 10" stroke={c} fill="none">
      <path d="M0 5.500h10M91 0l10 10M101 0L91 10" />
      <rect x="45.500" y=".5" width="9" height="9" />
    </svg>
  </WinButtons>
);

function ComputerManagement() {
  return (
    <Mmc>
      <TitleBar>
        <Icon n="computer" />
        <Text w={128} c="#999">Computer Management</Text>
        <CaptionGlyphs c="#888" />
      </TitleBar>
      <MenuBar>
        <MenuItem $w={34}><Text w={18.5}>File</Text></MenuItem>
        <MenuItem $w={51}><Text w={34.5}>Action</Text></MenuItem>
        <MenuItem $w={41}><Text w={25}>View</Text></MenuItem>
        <MenuItem $w={41}><Text w={25}>Help</Text></MenuItem>
      </MenuBar>
      <ToolBar>
        <ToolButton><Icon n="back" /></ToolButton>
        <ToolButton $mr={2}><Icon n="fwd" /></ToolButton>
        <ToolSep $mr={4} />
        <ToolButton $mr={1}><Icon n="up" /></ToolButton>
        <ToolButton $on $mr={2}><Icon n="winLeft" /></ToolButton>
        <ToolSep $mr={4} />
        <ToolButton $mr={1}><Icon n="help" /></ToolButton>
        <ToolButton $on $mr={2}><Icon n="winRight" /></ToolButton>
        <ToolSep $mr={4} />
        <ToolButton><Icon n="drivePlug" /></ToolButton>
        <ToolButton><Icon n="propsLight" /></ToolButton>
        <ToolButton><Icon n="listWin" /></ToolButton>
      </ToolBar>
      <MmcBody>
        <TreePane>
          {TREE.map(([icon, label, w, level, toggle, on]) => (
            <TreeRow key={label} $level={level}>
              <TreeToggle $level={level}>{toggle && <Icon n={toggle} />}</TreeToggle>
              <TreeLabel $on={on}>
                <Icon n={icon} />
                <Text w={w}>{label}</Text>
              </TreeLabel>
            </TreeRow>
          ))}
          <HScroll>
            <Icon n="sbLeft" />
            <HThumb />
            <Icon n="sbRight" />
          </HScroll>
        </TreePane>
        <CenterPane>
          <VolumeList>
            <ListHead>
              {HEAD.map(([t, w]) => (
                <HeadCell key={t}><Text w={w}>{t}</Text></HeadCell>
              ))}
              <HeadCell />
            </ListHead>
            {ROWS.map((cells, i) => (
              <ListRow key={i}>
                {cells.map((cell, j) => (
                  <ListCell key={j} $first={j === 0}>
                    {j === 0 && <Icon n="disk" />}
                    {cell && <Text w={cell[1]}>{cell[0]}</Text>}
                  </ListCell>
                ))}
              </ListRow>
            ))}
            <Speck />
          </VolumeList>
          <ListFoot />
          <DiskArea>
            <DiskRow>
              <DiskInfo>
                <InfoLine $lead><Icon n="disk" /><Text bold w={33}>Disk 0</Text></InfoLine>
                <InfoLine><Text w={27}>Basic</Text></InfoLine>
                <InfoLine><Text w={57}>1863.02 GB</Text></InfoLine>
                <InfoLine><Text w={35}>Online</Text></InfoLine>
              </DiskInfo>
              <Partitions>
                {PARTS.map(([w, color, name, size, status], i) => (
                  <Partition key={i} $w={w}>
                    <PartBar $c={color} />
                    <PartBox>
                      <PartLine>{name && <Text bold w={name[1]}>{name[0]}</Text>}</PartLine>
                      <PartLine><Text w={size[1]}>{size[0]}</Text></PartLine>
                      <PartLine $clip={i === 0}><Text w={status[1]}>{status[0]}</Text></PartLine>
                    </PartBox>
                  </Partition>
                ))}
              </Partitions>
            </DiskRow>
          </DiskArea>
          <Legend>
            <Swatch $c="#000" />
            <Text w={62.5}>Unallocated</Text>
            <Swatch $c="#000080" />
            <Text w={88.5}>Primary partition</Text>
          </Legend>
        </CenterPane>
        <ActionsPane>
          <ActionsHead><Text bold w={41}>Actions</Text></ActionsHead>
          <ActionsGroup>
            <Text w={95.5}>Disk Management</Text>
            <svg width="10" height="6"><path d="M5 0l5 6H0z" fill="#000" /></svg>
          </ActionsGroup>
          <ActionsItem>
            <Text w={70.5}>More Actions</Text>
            <svg width="5" height="10"><path d="M0 0l5 5-5 5z" fill="#000" /></svg>
          </ActionsItem>
        </ActionsPane>
      </MmcBody>
    </Mmc>
  );
}

/* ---------- explorer ---------- */

const Explorer = styled.div`
  width: 1720px;
  height: 1410px;
  background: #191919;
  color: #fff;
  border-left: 1px solid #3c3c3c;
  border-right: 1px solid #333;
  box-shadow: -1px 0 10px rgba(0, 0, 0, 0.3);
  display: flex;
  flex-direction: column;
  z-index: 1;
`;
const ExTitle = styled.div`
  height: 31px;
  flex: none;
  background: #2b2b2b;
  display: flex;
  align-items: center;
`;
const QuickTools = styled.div`
  width: 229px;
  display: flex;
  align-items: center;
  padding-left: 8px;
`;
const Spacer = styled.div`
  width: ${(p) => p.$w}px;
  display: flex;
  justify-content: center;
`;
const QuickSep = styled.div`
  width: 3px;
  height: 13px;
  border: 1px solid #666;
  border-width: 0 1px;
`;
const Manage = styled.div`
  width: 95px;
  height: 27px;
  margin: 4px 13px 0 0;
  background: #f0ee82;
  color: #111;
  display: flex;
  align-items: center;
  justify-content: center;
`;
const TabBar = styled.div`
  height: 23px;
  flex: none;
  background: #000;
  display: flex;
`;
const Tab = styled.div`
  width: ${(p) => p.$w}px;
  display: flex;
  align-items: center;
  justify-content: center;
  background: ${(p) => p.$bg || "transparent"};
  ${(p) => p.$edge && css`border: solid #222; border-width: 0 1px; margin-left: 1px;`}
`;
const TabTools = styled.div`
  margin-left: auto;
  display: flex;
  align-items: center;
  gap: 6px;
  padding: 0 3px 1px 0;
`;
const Ribbon = styled.div`
  height: 93px;
  flex: none;
  background: #202020;
  border-top: 1px solid #2b2b2b;
  border-bottom: 1px solid #2d2d2d;
  display: flex;
  padding-top: 2px;
`;
const Group = styled.div`
  width: ${(p) => p.$w}px;
  display: flex;
  flex-direction: column;
  align-items: center;
  background: linear-gradient(#484848, #484848) right top / 1px 72px no-repeat;
`;
const GroupBody = styled.div`
  height: 72px;
  width: 100%;
  display: flex;
  padding-left: ${(p) => p.$pl || 0}px;
  padding-top: 5px;
`;
const Big = styled.div`
  width: ${(p) => p.$w}px;
  display: flex;
  flex-direction: column;
  align-items: center;
  color: ${(p) => (p.$off ? "#adadad" : "#fff")};
`;
const BigLine = styled.div`
  height: 13px;
  display: flex;
  align-items: center;
  gap: 4px;
  &:nth-child(2) { margin-top: 4px; }
`;
const Stack = styled.div`
  display: flex;
  flex-direction: column;
  margin-left: ${(p) => p.$ml || 0}px;
`;
const Small = styled.div`
  height: 22px;
  margin-top: -3px;
  margin-bottom: 3px;
  display: flex;
  align-items: center;
  gap: 4px;
  color: ${(p) => (p.$off ? "#adadad" : "#fff")};
`;
const VRule = styled.div`
  width: 1px;
  height: 55px;
  margin: 2px 7px 0 3px;
  background: #484848;
`;
const NavBar = styled.div`
  height: 42px;
  flex: none;
  background: #191919;
  display: flex;
  align-items: center;
  padding: 0 12px 2px 10px;
`;
const NavSlot = styled.div`
  width: ${(p) => p.$w}px;
  display: flex;
`;
const Address = styled.div`
  width: 1246px;
  height: 30px;
  border: 1px solid #535353;
  display: flex;
  align-items: center;
  padding-left: 3px;
`;
const Crumb = styled.div`
  width: ${(p) => p.$w}px;
  display: flex;
  align-items: center;
  gap: 3px;
`;
const AddressEnd = styled.div`
  margin-left: auto;
  display: flex;
  align-items: center;
  height: 28px;
`;
const AddressSlot = styled.div`
  height: 28px;
  width: ${(p) => p.$w}px;
  display: flex;
  align-items: center;
  justify-content: center;
  border-right: ${(p) => (p.$line ? "1px solid #101010" : "0")};
`;
const Search = styled.div`
  width: 342px;
  height: 30px;
  margin-left: 12px;
  border: 1px solid #535353;
  display: flex;
  align-items: center;
  gap: 12px;
  padding-left: 13px;
  color: #7d7d7d;
`;
const ExBody = styled.div`
  flex: 1;
  display: flex;
  min-height: 0;
`;
const Side = styled.div`
  width: 157px;
  padding: 16px 1px 0 0;
  border-right: 1px solid #111;
`;
const SideRow = styled.div`
  height: 24px;
  margin-bottom: ${(p) => (p.$gap ? 8 : 0)}px;
  display: flex;
  align-items: center;
  overflow: hidden;
  padding-left: ${(p) => [24, 32, 40][p.$level]}px;
  gap: 5px;
  ${(p) => p.$on && css`background: linear-gradient(#333, #333) 1px 1px / 100% 22px no-repeat;`}
`;
const PinSlot = styled.div`
  margin-left: auto;
  margin-right: -1px;
`;
const Files = styled.div`
  flex: 1;
  background: #202020;
  border-left: 1px solid #2b2b2b;
  display: flex;
  justify-content: center;
  padding: 15px 0 0 1px;
`;
const Status = styled.div`
  height: 24px;
  flex: none;
  background: #333;
  display: flex;
  align-items: center;
  padding: 0 4px 1px 14px;
`;
const StatusRule = styled.div`
  width: 1px;
  height: 12px;
  margin-left: 9px;
  background: #ccc;
`;
const ViewSwitch = styled.div`
  margin-left: auto;
  display: flex;
  align-items: center;
  gap: 2px;
`;
const ViewOn = styled.div`
  width: 22px;
  height: 23px;
  background: #666;
  border: 1px solid #8c8c8c;
  display: flex;
  align-items: center;
  justify-content: center;
`;

const Arrow = ({ c = "#fff" }) => (
  <svg width="7" height="4"><path d="M.5 .5h6L3.500 3.500z" fill={c} /></svg>
);

const BigButton = ({ w, icon, lines, off, arrow }) => (
  <Big $w={w} $off={off}>
    <BigIcon n={icon} />
    {lines.map(([t, tw], i) => (
      <BigLine key={t}>
        <Text w={tw}>{t}</Text>
        {arrow === "inline" && i === lines.length - 1 && <Arrow c="#666" />}
      </BigLine>
    ))}
    {arrow === "below" && <BigLine><Arrow /></BigLine>}
  </Big>
);
const SmallButton = ({ icon, t, w, off, arrow }) => (
  <Small $off={off}>
    <Icon n={icon} />
    <Text w={w}>{t}</Text>
    {arrow && <Arrow c={off ? "#666" : "#ddd"} />}
  </Small>
);
const RibbonGroup = ({ w, pl, label, lw, children }) => (
  <Group $w={w}>
    <GroupBody $pl={pl}>{children}</GroupBody>
    <Text w={lw} c="#adadad">{label}</Text>
  </Group>
);

const SIDE = [
  ["star", "Quick access", 68, 0],
  ["desktop", "Desktop", 43, 1, "pin"],
  ["download", "Downloads", 59, 1, "pin"],
  ["docs", "Documents", 61, 1, "pin"],
  ["pics", "Pictures", 42, 1, "pin"],
  ["drive", "Local Disk (C:)", 75, 1, "pin"],
  ["gdrive", "Google Drive", 68, 1, "pin"],
  ["folder", "Farming Simulator 19", 114, 1],
  ["folderUser", "mods", 30, 1],
  ["folder", "Screenshots", 63, 1],
  ["folder", "Weather Forecast", 91, 1, "gap"],
  ["onedrive", "OneDrive", 49, 0],
  ["folder", "Documents", 61, 1],
  ["folder", "Pictures", 42, 1],
  ["folder", "Screenshots", 63, 2, "gap", true],
  ["thispc", "This PC", 39, 0, "gap"],
  ["network", "Network", 45, 0],
];

function FileExplorer() {
  return (
    <Explorer>
      <ExTitle>
        <QuickTools>
          <Icon n="folder" />
          <Spacer $w={17}><QuickSep /></Spacer>
          <Icon n="propsDark" />
          <Spacer $w={6} />
          <Icon n="folder" />
          <Spacer $w={21}>
            <svg width="8" height="8"><path d="M0 1h8M1 4h6L4 7.500z" fill="#fff" stroke="#fff" strokeWidth=".8" /></svg>
          </Spacer>
          <QuickSep />
        </QuickTools>
        <Manage><Text w={42}>Manage</Text></Manage>
        <Text w={63} c="#999">Screenshots</Text>
        <CaptionGlyphs c="#999" />
      </ExTitle>
      <TabBar>
        <Tab $w={57} $bg="#525252"><Text w={18}>File</Text></Tab>
        <Tab $w={57} $bg="#202020"><Text w={30}>Home</Text></Tab>
        <Tab $w={58}><Text w={29}>Share</Text></Tab>
        <Tab $w={56}><Text w={25}>View</Text></Tab>
        <Tab $w={95} $edge><Text w={65}>Picture Tools</Text></Tab>
        <TabTools>
          <Icon n="ribUp" />
          <Icon n="helpBlue" />
        </TabTools>
      </TabBar>
      <Ribbon>
        <RibbonGroup w={263} label="Clipboard" lw={51}>
          <BigButton w={78} icon="pin" lines={[["Pin to Quick", 62], ["access", 31]]} />
          <BigButton w={31} icon="copy" lines={[["Copy", 26]]} off />
          <BigButton w={53} icon="paste" lines={[["Paste", 27]]} off />
          <Stack $ml={-3}>
            <SmallButton icon="cut" t="Cut" w={18} off />
            <SmallButton icon="copyPath" t="Copy path" w={53} off />
            <SmallButton icon="pasteShort" t="Paste shortcut" w={73} off />
          </Stack>
        </RibbonGroup>
        <RibbonGroup w={191} label="Organize" lw={47} pl={5}>
          <BigButton w={40} icon="moveTo" lines={[["Move", 28], ["to", 11]]} off arrow="inline" />
          <BigButton w={44} icon="copyTo" lines={[["Copy", 26], ["to", 11]]} off arrow="inline" />
          <VRule />
          <BigButton w={33} icon="del" lines={[["Delete", 33]]} arrow="below" />
          <BigButton w={54} icon="rename" lines={[["Rename", 41]]} off />
        </RibbonGroup>
        <RibbonGroup w={145} label="New" lw={23} pl={4}>
          <BigButton w={41} icon="newFolder" lines={[["New", 22.500], ["folder", 31]]} />
          <Stack $ml={4}>
            <SmallButton icon="newItem" t="New item" w={47.5} arrow />
            <SmallButton icon="easy" t="Easy access" w={56.5} arrow />
          </Stack>
        </RibbonGroup>
        <RibbonGroup w={133} label="Open" lw={28.5} pl={6}>
          <BigButton w={52} icon="props" lines={[["Properties", 51.500]]} arrow="below" />
          <Stack $ml={6}>
            <SmallButton icon="openG" t="Open" w={28.5} off arrow />
            <SmallButton icon="editG" t="Edit" w={19.5} off />
            <SmallButton icon="history" t="History" w={35.5} />
          </Stack>
        </RibbonGroup>
        <RibbonGroup w={115} label="Select" lw={30} pl={7}>
          <Stack>
            <SmallButton icon="selAll" t="Select all" w={45} />
            <SmallButton icon="selNone" t="Select none" w={60} />
            <SmallButton icon="selInv" t="Invert selection" w={78} />
          </Stack>
        </RibbonGroup>
      </Ribbon>
      <NavBar>
        <NavSlot $w={31}><Icon n="navBack" /></NavSlot>
        <NavSlot $w={24}><Icon n="navFwd" /></NavSlot>
        <NavSlot $w={20}><Icon n="navDown" /></NavSlot>
        <NavSlot $w={21}><Icon n="navUp" /></NavSlot>
        <Address>
          <Crumb $w={16}><Icon n="folder" /></Crumb>
          <Crumb $w={72}><Icon n="cRightSm" /><Text w={49}>OneDrive</Text></Crumb>
          <Crumb $w={65}><Icon n="cRightSm" /><Text w={42}>Pictures</Text></Crumb>
          <Crumb $w={90}><Icon n="cRightSm" /><Text w={63}>Screenshots</Text></Crumb>
          <AddressEnd>
            <AddressSlot $w={29} $line><Icon n="addrDown" /></AddressSlot>
            <AddressSlot $w={30}><Icon n="refresh" /></AddressSlot>
          </AddressEnd>
        </Address>
        <Search><Icon n="glass" /><Text w={101}>Search Screenshots</Text></Search>
      </NavBar>
      <ExBody>
        <Side>
          {SIDE.map(([icon, label, w, level, extra, on], i) => (
            <SideRow key={i} $level={level} $gap={extra === "gap"} $on={on}>
              <Icon n={icon} />
              <Text w={w}>{label}</Text>
              {extra === "pin" && <PinSlot><Icon n="pin" /></PinSlot>}
            </SideRow>
          ))}
        </Side>
        <Files><Text w={106}>This folder is empty.</Text></Files>
      </ExBody>
      <Status>
        <Text w={38}>0 items</Text>
        <StatusRule />
        <ViewSwitch>
          <Icon n="viewDetails" size={17} />
          <ViewOn><Icon n="pics" size={14} /></ViewOn>
        </ViewSwitch>
      </Status>
    </Explorer>
  );
}

/* ---------- taskbar ---------- */

const Bar = styled.div`
  height: 30px;
  background: linear-gradient(90deg, #444 0, #444 1680px, #1d1d1d 1770px, #1d1d1d);
  color: #fff;
  display: flex;
  align-items: center;
  padding-left: 10px;
`;
const StartArea = styled.div`
  width: 755px;
  display: flex;
  gap: 20px;
`;
const TaskButton = styled.div`
  width: 37px;
  height: 30px;
  display: flex;
  align-items: center;
  justify-content: center;
  background: linear-gradient(#bcbcbc, #bcbcbc) center bottom / ${(p) => (p.$run ? 28 : 0)}px 2px no-repeat;
  ${(p) => p.$active && css`
    background: linear-gradient(#bcbcbc, #bcbcbc) left bottom / 100% 2px no-repeat,
      linear-gradient(90deg, #3e3e3e 33px, #2f2f2f 33px);
  `}
`;
const Tray = styled.div`
  margin-left: auto;
  display: flex;
  align-items: center;
  gap: 8px;
  height: 30px;
`;
const Clock = styled.div`
  width: 61px;
  padding-left: 5px;
`;
const ShowDesktop = styled.div`
  width: 5px;
  height: 30px;
  margin-left: 12px;
  border-left: 1px solid #666;
`;

const TASKS = [["bnet"], ["chrome", true, true], ["mail"], ["explorer", true], ["steam"], ["discord"], ["rings"], ["twitch"], ["computer", true]];

export default function App() {
  return (
    <>
      <Global />
      <Desktop>
        <Windows>
          <ComputerManagement />
          <FileExplorer />
        </Windows>
        <Bar>
          <StartArea>
            <Icon n="win" />
            <Icon n="glassWhite" />
          </StartArea>
          {TASKS.map(([icon, run, active]) => (
            <TaskButton key={icon} $run={run} $active={active}><Icon n={icon} /></TaskButton>
          ))}
          <Tray>
            <Icon n="trayUp" />
            <Icon n="sync" />
            <Icon n="lan" />
            <Icon n="volume" size={17} />
            <Clock><Text w={42}>4:30 PM</Text></Clock>
            <Icon n="action" />
            <ShowDesktop />
          </Tray>
        </Bar>
      </Desktop>
    </>
  );
}
